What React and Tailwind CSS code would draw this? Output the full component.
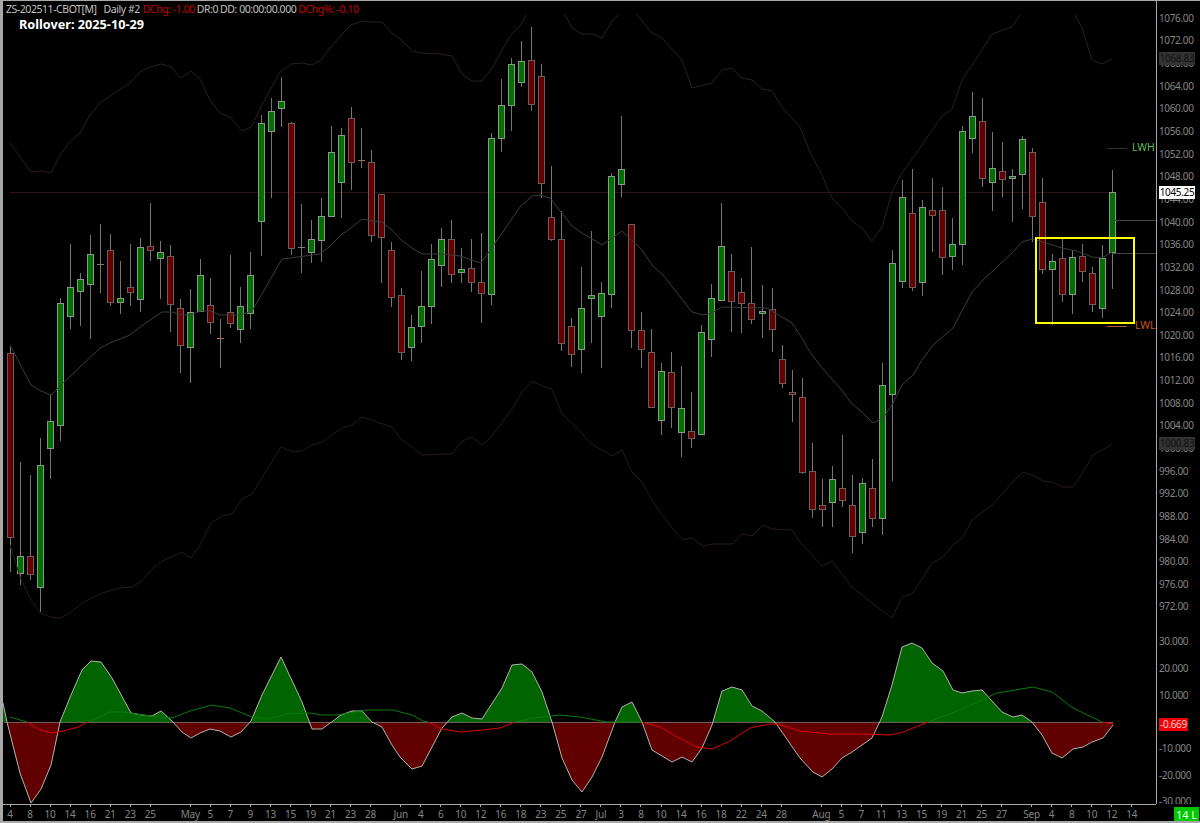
import React from "react";

// [high, low, bodyTop, bodyBottom, colour] in page pixels, one per session
const candles = [
  [347, 572, 353, 537, "r"], [462, 585, 556, 573, "g"], [475, 580, 556, 574, "r"], [438, 612, 465, 587, "g"],
  [394, 479, 421, 448, "g"], [298, 441, 303, 425, "g"], [244, 329, 287, 316, "g"], [273, 326, 279, 291, "g"],
  [235, 339, 254, 284, "g"], [224, 293, 264, 264, "d"], [234, 306, 250, 302, "r"], [261, 314, 298, 302, "g"],
  [244, 306, 287, 292, "r"], [238, 312, 247, 299, "g"], [203, 261, 246, 250, "r"], [241, 299, 252, 258, "g"],
  [245, 332, 256, 304, "r"], [299, 373, 308, 345, "r"], [289, 383, 312, 347, "g"], [259, 312, 275, 311, "g"],
  [278, 334, 305, 322, "r"], [319, 368, 338, 338, "o"], [255, 328, 312, 323, "r"], [287, 343, 306, 329, "g"],
  [252, 329, 275, 313, "g"], [115, 256, 123, 221, "g"], [98, 198, 111, 131, "g"], [77, 127, 101, 108, "g"],
  [122, 255, 123, 248, "r"], [204, 273, 247, 247, "d"], [220, 263, 239, 252, "g"], [198, 262, 216, 240, "g"],
  [126, 216, 152, 216, "g"], [128, 218, 135, 182, "g"], [107, 190, 118, 162, "r"], [128, 168, 160, 160, "o"],
  [150, 242, 162, 235, "r"], [194, 283, 194, 237, "r"], [242, 307, 250, 297, "r"], [288, 360, 295, 352, "r"],
  [315, 361, 327, 347, "g"], [271, 343, 306, 326, "g"], [244, 324, 259, 306, "g"], [228, 287, 239, 265, "g"],
  [220, 283, 239, 274, "r"], [248, 283, 269, 272, "g"], [239, 292, 268, 282, "r"], [233, 323, 282, 293, "r"],
  [133, 305, 138, 294, "g"], [79, 152, 105, 138, "g"], [58, 131, 64, 105, "g"], [41, 87, 61, 82, "g"],
  [27, 111, 60, 104, "r"], [64, 198, 76, 183, "r"], [166, 241, 217, 239, "r"], [211, 351, 239, 343, "r"],
  [318, 367, 326, 354, "r"], [267, 373, 308, 349, "g"], [231, 343, 295, 298, "g"], [282, 368, 293, 316, "g"],
  [173, 308, 176, 294, "g"], [116, 197, 169, 184, "g"], [224, 348, 224, 330, "r"], [312, 368, 330, 349, "r"],
  [329, 407, 352, 407, "r"], [363, 435, 371, 420, "g"], [352, 428, 372, 407, "r"], [366, 457, 408, 432, "g"],
  [392, 448, 431, 438, "r"], [325, 434, 332, 434, "g"], [284, 357, 298, 339, "g"], [203, 300, 246, 300, "g"],
  [254, 332, 271, 301, "r"], [278, 333, 292, 303, "r"], [247, 324, 303, 319, "r"], [285, 338, 311, 313, "g"],
  [288, 352, 309, 329, "r"], [345, 388, 359, 383, "r"], [370, 422, 392, 394, "r"], [378, 474, 397, 472, "r"],
  [443, 518, 471, 509, "r"], [479, 527, 505, 509, "r"], [466, 527, 479, 502, "g"], [435, 507, 488, 500, "r"],
  [475, 553, 505, 536, "r"], [478, 544, 483, 532, "g"], [459, 527, 488, 518, "r"], [363, 535, 385, 518, "g"],
  [250, 481, 263, 394, "g"], [180, 288, 197, 281, "g"], [169, 291, 213, 287, "r"], [200, 296, 207, 282, "g"],
  [178, 252, 210, 215, "r"], [187, 275, 210, 257, "r"], [218, 270, 244, 256, "g"], [126, 265, 131, 244, "g"],
  [92, 153, 116, 138, "g"], [98, 187, 121, 178, "r"], [132, 211, 168, 182, "g"], [142, 197, 171, 179, "r"],
  [169, 222, 176, 178, "g"], [136, 209, 139, 174, "g"], [148, 242, 152, 216, "r"], [178, 274, 202, 269, "r"],
  [254, 325, 261, 269, "g"], [238, 302, 258, 294, "r"], [250, 314, 257, 294, "g"], [244, 282, 256, 271, "r"],
  [267, 312, 273, 304, "r"], [245, 318, 258, 308, "g"], [170, 289, 192, 252, "g"],
];

const upperBand = [
  "10,143 31,172 41,171 51,173 60,155 70,142 80,133 90,115 101,102 110,96 130,83 140,72 150,67 161,64 171,67 181,78 191,71 200,79 210,100 220,113 230,117 242,131 251,127 262,105 280,72 291,64 302,63 312,65 321,60 331,47 341,35 351,25 362,21 372,22 382,22 392,33 400,39 412,51 422,53 440,54 452,56 462,74 472,81 482,81 492,68 510,36 520,26 526,15",
  "565,15 572,28 582,34 592,34 602,38 612,21 618,15",
  "637,15 652,33 662,38 682,60 692,88 712,83 722,70 732,68 742,78 752,80 762,89 772,91 782,107 800,127 810,152 822,175 832,198 842,208 852,221 862,228 872,241 882,227 892,192 902,173 922,145 942,116 952,109 962,80 982,50 992,34 1012,27 1020,15",
  "1075,15 1082,28 1092,60 1102,64 1112,59",
];

const middleBand =
  "10,345 31,385 41,391 51,395 63,383 80,367 100,348 110,343 130,335 140,327 150,320 162,312 172,312 182,315 191,315 200,311 210,311 220,315 240,315 252,311 262,294 282,259 320,254 330,246 341,235 351,228 362,219 372,221 382,222 392,230 400,239 412,248 422,254 442,254 460,256 481,263 500,236 520,207 532,196 540,195 550,198 572,226 582,233 602,245 622,231 642,250 652,265 663,275 692,312 703,315 712,313 722,307 767,308 792,323 800,335 810,352 822,368 840,388 852,404 862,412 873,423 883,418 892,405 902,385 913,375 922,360 933,345 953,328 972,292 983,280 1013,252 1022,242 1032,239 1043,242 1062,248 1077,251 1092,257 1102,258 1112,252";

const lowerBand =
  "10,545 20,577 30,598 40,613 50,617 60,618 70,613 82,603 102,593 120,588 132,587 142,581 152,569 162,561 182,552 191,558 200,545 211,523 222,516 232,514 242,499 252,494 281,447 293,452 302,451 312,445 322,442 342,428 352,425 362,417 392,427 400,438 422,455 440,454 452,454 462,441 472,437 482,445 491,437 512,409 522,392 532,381 542,386 552,389 562,414 572,423 592,444 612,456 622,450 632,472 642,482 653,502 672,528 683,540 692,538 703,546 712,544 732,544 742,534 752,536 763,525 772,529 792,530 800,542 822,566 832,561 852,587 872,603 892,618 902,597 913,593 932,563 943,557 953,545 963,537 972,520 992,505 1012,483 1023,472 1032,475 1043,481 1052,482 1063,487 1073,487 1083,472 1093,455 1102,450 1112,444";

const histogram =
  "3,703 7,722 20,773 31,803 41,789 51,765 60,722 71,695 82,670 91,661 101,662 112,678 131,713 142,715 152,716 161,711 172,721 182,732 191,738 200,733 210,729 220,731 231,737 241,732 251,721 262,695 281,657 302,702 312,729 322,729 341,715 352,711 362,711 372,722 382,727 392,745 400,757 412,769 422,766 442,728 452,717 462,713 472,718 482,719 502,688 512,665 522,664 532,672 542,692 552,722 562,758 572,780 582,792 592,777 602,757 615,722 622,707 632,702 642,722 652,750 662,756 672,762 682,757 692,762 702,748 712,725 722,691 732,687 742,690 752,706 762,711 775,722 800,758 813,772 822,777 832,769 842,758 852,752 872,738 882,717 892,685 902,647 912,643 922,648 932,663 943,671 953,690 962,693 972,691 982,690 1002,712 1013,717 1022,715 1032,722 1042,735 1052,753 1062,758 1073,749 1083,747 1092,742 1103,738 1113,725";

// signal line runs green above zero and red below
const signalGreen = [
  "10,717 20,720 27,722",
  "88,722 110,712 123,712 143,715 160,717 172,718 190,711 212,705 230,708 252,717 267,719 287,714 310,713 322,715 337,715 367,710 393,710 412,715 423,721 428,722",
  "515,722 533,718 560,715 580,717 607,722 642,722",
  "928,722 960,710 997,693 1033,687 1052,692 1073,708 1102,722",
];
const signalRed = [
  "27,722 40,730 52,733 63,731 78,727 88,722",
  "428,722 442,729 460,732 482,730 500,728 515,722",
  "642,722 660,727 677,737 697,747 712,749 728,742 750,728 770,724 778,724 800,731 830,734 863,734 890,735 903,732 928,722",
  "1102,722 1113,724",
];

const priceLabels = [
  "1076.00", "1072.00", "1068.00", "1064.00", "1060.00", "1056.00", "1052.00", "1048.00", "1044.00",
  "1040.00", "1036.00", "1032.00", "1028.00", "1024.00", "1020.00", "1016.00", "1012.00", "1008.00",
  "1004.00", "1000.00", "996.00", "992.00", "988.00", "984.00", "980.00", "976.00", "972.00",
];
const oscLabels = ["30.000", "20.000", "10.000", "", "-10.000", "-20.000", "-30.000"];

const timeLabels = [
  [0, "4"], [2, "8"], [4, "10"], [6, "14"], [8, "16"], [10, "21"], [12, "23"], [14, "25"], [18, "May"],
  [20, "5"], [22, "7"], [24, "9"], [26, "13"], [28, "15"], [30, "19"], [32, "21"], [34, "23"], [36, "28"],
  [39, "Jun"], [41, "4"], [43, "6"], [45, "10"], [47, "12"], [49, "16"], [51, "18"], [53, "23"], [55, "25"],
  [57, "27"], [59, "Jul"], [61, "3"], [63, "8"], [65, "10"], [67, "14"], [69, "16"], [71, "18"], [73, "22"],
  [75, "24"], [77, "28"], [81, "Aug"], [83, "5"], [85, "7"], [87, "11"], [89, "13"], [91, "15"], [93, "19"],
  [95, "21"], [97, "25"], [99, "27"], [102, "Sep"], [104, "4"], [106, "8"], [108, "10"], [110, "12"], [112, "14"],
];

const bodyFill = { g: "#007000", r: "#640000", d: "#808080", o: "#a87050" };
const bodyEdge = { g: "#8c988c", r: "#6e5c5c", d: "#808080", o: "#a87050" };

function Candle({ c, i }) {
  const [high, low, top, bottom, kind] = c;
  const cx = Math.round(10 + i * 10.02);
  return (
    <g>
      <line x1={cx + 0.5} x2={cx + 0.5} y1={high} y2={low} stroke="#767676" />
      {top === bottom ? (
        <line x1={cx - 3} x2={cx + 4} y1={top + 0.5} y2={top + 0.5} stroke={bodyEdge[kind]} />
      ) : (
        <rect x={cx - 2.5} y={top + 0.5} width={6} height={bottom - top} fill={bodyFill[kind]} stroke={bodyEdge[kind]} />
      )}
    </g>
  );
}

function Chart() {
  return (
    <svg className="block h-full w-full" viewBox="3 1 1153 803" fill="none">
      <defs>
        <clipPath id="aboveZero"><rect x="3" y="600" width="1153" height="122" /></clipPath>
        <clipPath id="belowZero"><rect x="3" y="722" width="1153" height="90" /></clipPath>
      </defs>

      <line x1="10" x2="1112" y1="192.5" y2="192.5" stroke="#2c1414" />

      {candles.map((c, i) => (
        <Candle key={i} c={c} i={i} />
      ))}

      {upperBand.map((pts, i) => (
        <polyline key={i} points={pts} stroke="#2a2020" />
      ))}
      <polyline points={middleBand} stroke="#3e3c3c" />
      <polyline points={lowerBand} stroke="#261a1a" />

      {/* last price and mid band leaders */}
      <line x1="1112" x2="1156" y1="220.5" y2="220.5" stroke="#444444" />
      <line x1="1112" x2="1156" y1="253.5" y2="253.5" stroke="#444444" />
      <line x1="1107" x2="1127" y1="148.5" y2="148.5" stroke="#2a382a" />
      <line x1="1107" x2="1127" y1="326.5" y2="326.5" stroke="#b85a28" />

      <rect x="1036" y="238" width="98" height="85" stroke="#ffff00" strokeWidth="2" />

      {/* oscillator */}
      <polygon points={`${histogram} 1113,722 3,722`} fill="#006400" clipPath="url(#aboveZero)" />
      <polygon points={`${histogram} 1113,722 3,722`} fill="#600000" clipPath="url(#belowZero)" />
      <line x1="4" x2="1113" y1="722.5" y2="722.5" stroke="#6e5a5a" />
      <polyline points={histogram} stroke="#b4b4ae" />
      {signalGreen.map((pts, i) => (
        <polyline key={i} points={pts} stroke="#0a7c0a" />
      ))}
      {signalRed.map((pts, i) => (
        <polyline key={i} points={pts} stroke="#e00000" />
      ))}
    </svg>
  );
}

function PriceAxis() {
  return (
    <div className="relative w-[43px] overflow-hidden border-l border-[#a8a8a8] pl-[2px] pt-[6px] text-[10px] tracking-[-0.35px] text-[#858585]">
      {priceLabels.map((p) => (
        <div key={p} className="flex h-[22.65px] items-center">{p}</div>
      ))}
      <div className="mt-[10px]">
        {oscLabels.map((p, i) => (
          <div key={i} className="flex h-[26.7px] items-center">{p}</div>
        ))}
      </div>

      <span className="absolute left-[2px] top-[51px] w-[36px] bg-[#333333] text-center leading-[13px] text-[#111111]">1068.83</span>
      <span className="absolute left-[2px] top-[185px] w-[36px] bg-white text-center leading-[13px] text-black">1045.25</span>
      <span className="absolute left-[2px] top-[436px] w-[36px] bg-[#333333] text-center leading-[13px] text-[#111111]">1000.83</span>
      <span className="absolute left-[2px] top-[717px] w-[29px] bg-[#f00000] text-center leading-[13px] text-[#ffd0d0]">-0.669</span>
    </div>
  );
}

function TimeAxis() {
  return (
    <div className="grid h-full w-[1153px] grid-cols-[repeat(114,10.02px)] border-t border-[#a8a8a8] pl-[2px]">
      {timeLabels.map(([i, label]) => (
        <div key={i} className="flex flex-col items-center" style={{ gridColumn: i + 1 }}>
          <div className="h-[2px] w-px bg-[#a8a8a8]" />
          <span className="mt-[1px] whitespace-nowrap text-[10px] leading-[13px] tracking-[-0.2px] text-[#858585]">{label}</span>
        </div>
      ))}
    </div>
  );
}

export default function App() {
  return (
    <div className="flex h-[823px] w-[1200px] flex-col overflow-hidden border-b-2 border-l-[3px] border-t border-[#a8a8a8] bg-black font-['Noto_Sans',sans-serif]">
      <div className="flex h-[803px] shrink-0">
        <div className="relative w-[1153px]">
          <Chart />

          <div className="absolute left-[3px] top-[1px] flex gap-[2px] text-[10.5px] leading-[15px] tracking-[-0.45px] text-[#c0c0c0]">
            <span>ZS-202511-CBOT[M]</span>
            <span className="ml-[5px] mr-[1px]">Daily #2</span>
            <span className="text-[#c00000]">DChg: -1.00</span>
            <span>DR:0</span>
            <span>DD: 00:00:00.000</span>
            <span className="text-[#c00000]">DChg%: -0.10</span>
          </div>
          <div className="absolute left-[16px] top-[15px] text-[12.7px] font-bold leading-[16px] text-white">
            Rollover: 2025-10-29
          </div>

          <span className="absolute left-[1129px] top-[139px] text-[10.5px] leading-[15px] text-[#5cb85c]">LWH</span>
          <span className="absolute left-[1132px] top-[317px] text-[10.5px] leading-[15px] text-[#c8571f]">LWL</span>
        </div>
        <PriceAxis />
      </div>

      <div className="flex min-h-0 flex-1">
        <TimeAxis />
        <div className="ml-auto mr-[1px] mt-[3px] flex h-[14px] w-[25px] items-center justify-center bg-[#00c800] text-[11px] leading-none text-[#e8ffe8]">
          14 L
        </div>
      </div>
    </div>
  );
}
